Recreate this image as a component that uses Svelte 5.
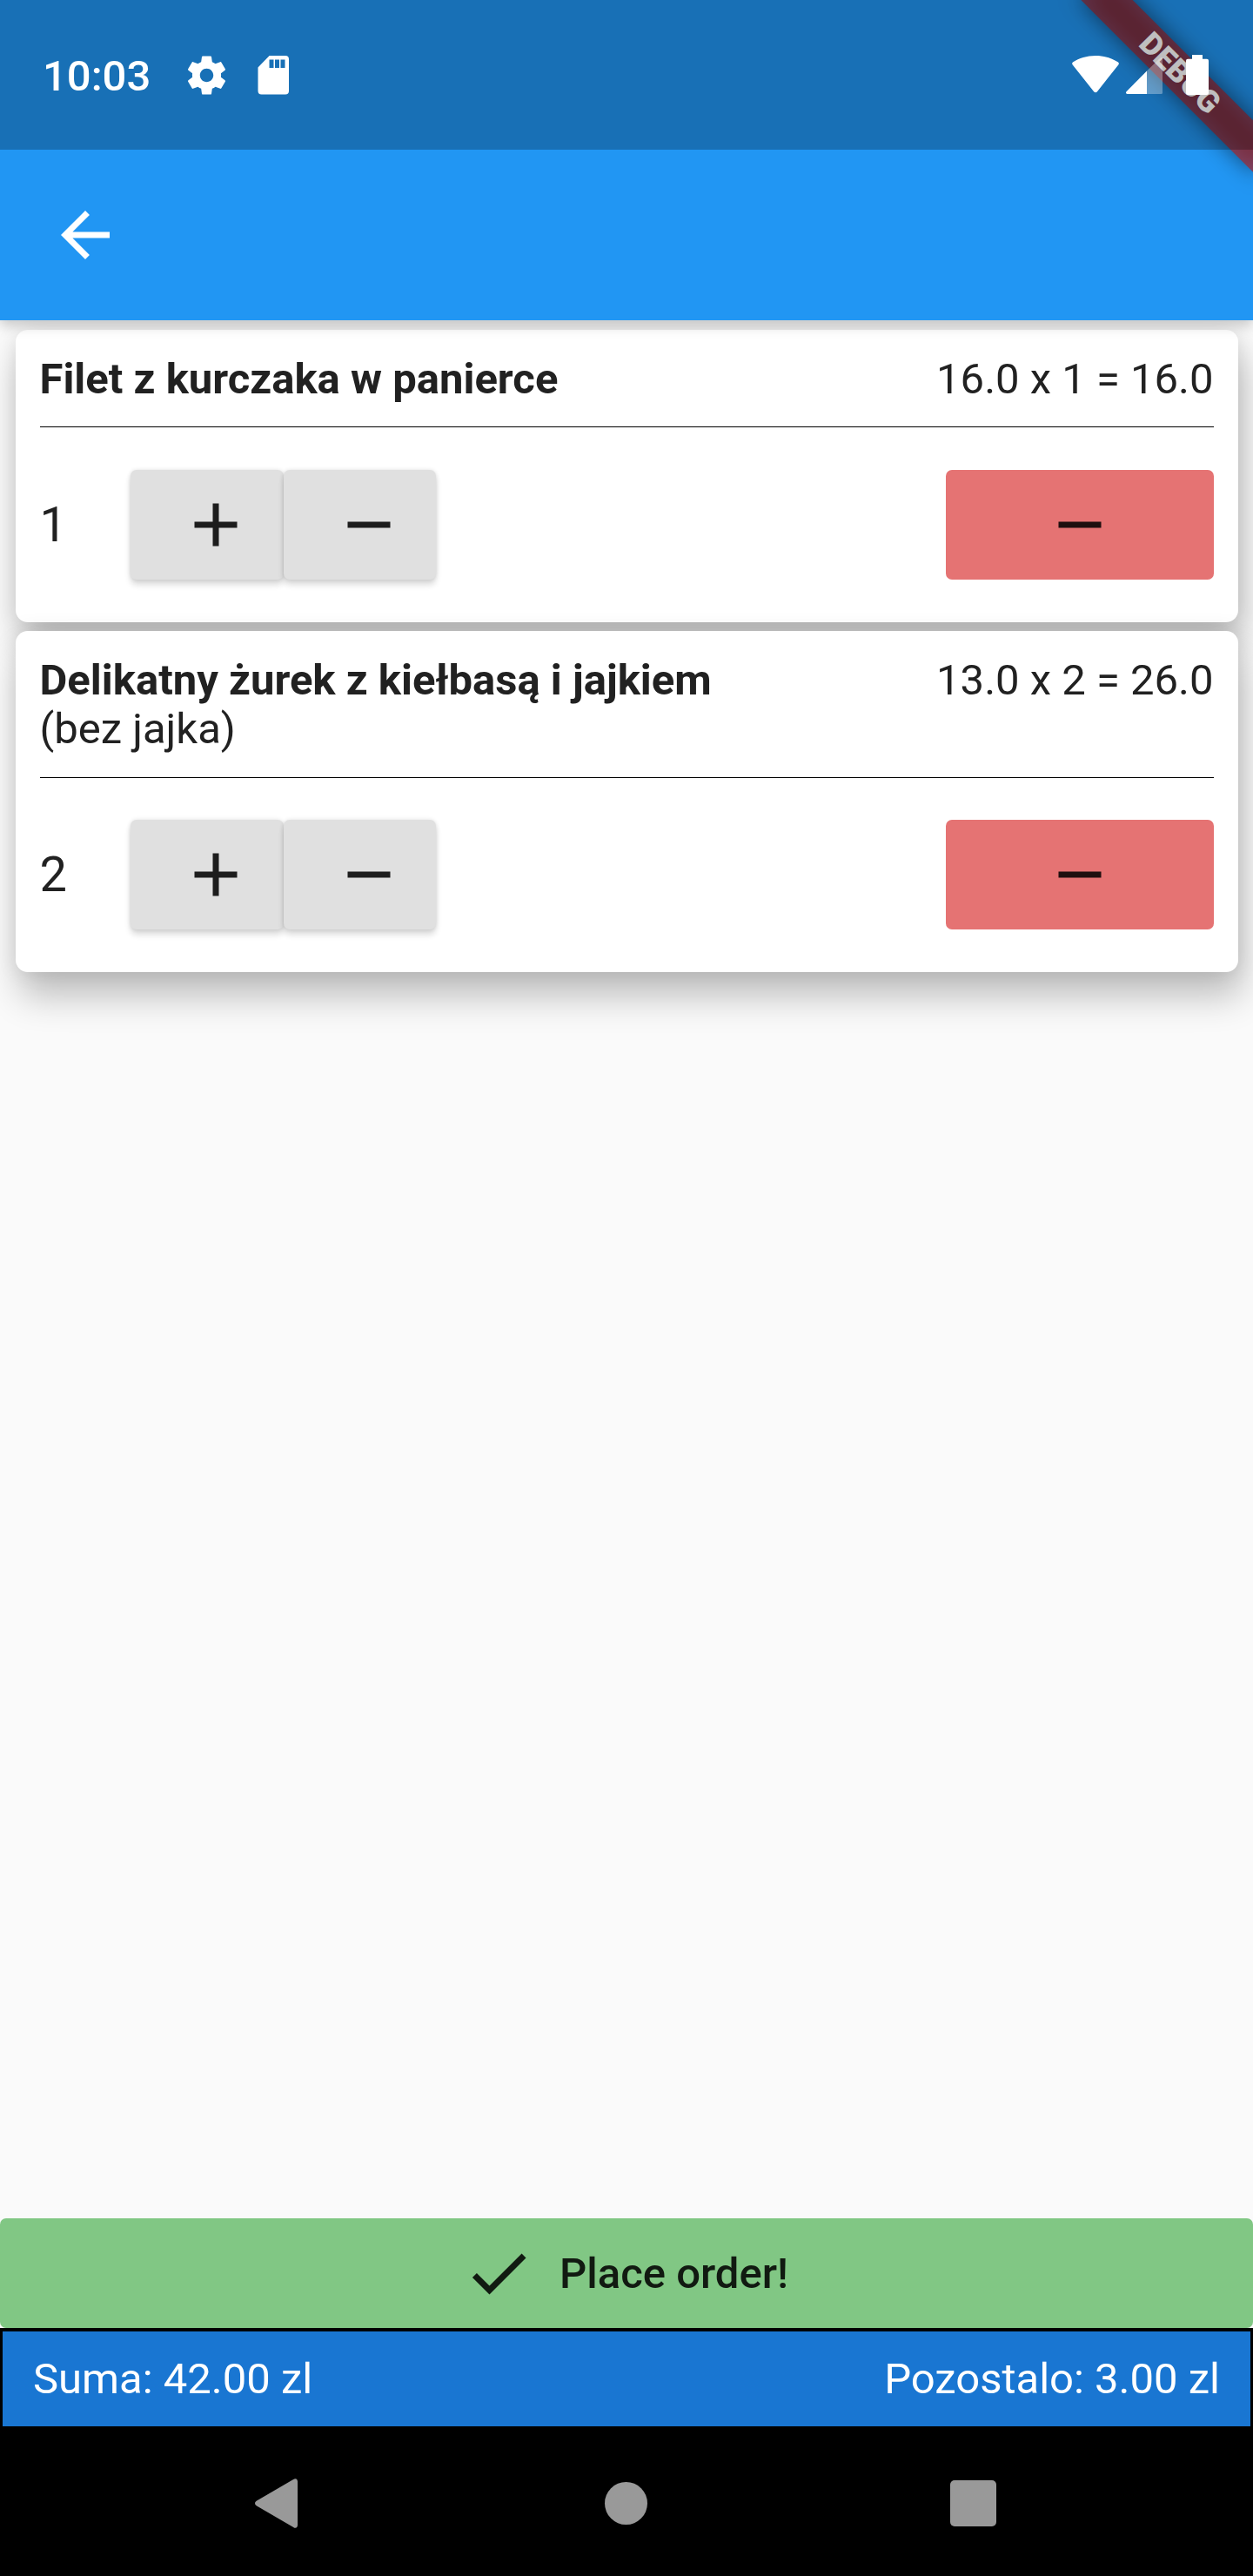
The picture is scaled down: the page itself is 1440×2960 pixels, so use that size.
<script>
  const items = [
    { name: 'Filet z kurczaka w panierce', note: '', sum: '16.0 x 1 = 16.0', count: 1 },
    { name: 'Delikatny żurek z kiełbasą i jajkiem', note: '(bez jajka)', sum: '13.0 x 2 = 26.0', count: 2 }
  ];
</script>

<div class="screen">
  <div class="banner-clip">
    <div class="banner-shadow"></div>
    <div class="banner">DEBUG</div>
  </div>

  <div class="status">
    <span class="clock">10:03</span>
    <svg class="gear" viewBox="0 0 24 24"><path d="M19.43 12.98c.04-.32.07-.64.07-.98s-.03-.66-.07-.98l2.11-1.65c.19-.15.24-.42.12-.64l-2-3.46c-.12-.22-.39-.3-.61-.22l-2.49 1c-.52-.4-1.08-.73-1.69-.98l-.38-2.65C14.46 2.18 14.25 2 14 2h-4c-.25 0-.46.18-.49.42l-.38 2.65c-.61.25-1.17.59-1.69.98l-2.49-1c-.23-.09-.49 0-.61.22l-2 3.46c-.13.22-.07.49.12.64l2.11 1.65c-.04.32-.07.65-.07.98s.03.66.07.98l-2.11 1.65c-.19.15-.24.42-.12.64l2 3.46c.12.22.39.3.61.22l2.49-1c.52.4 1.08.73 1.69.98l.38 2.65c.03.24.24.42.49.42h4c.25 0 .46-.18.49-.42l.38-2.65c.61-.25 1.17-.59 1.69-.98l2.49 1c.23.09.49 0 .61-.22l2-3.46c.12-.22.07-.49-.12-.64l-2.11-1.65zM12 15.5c-1.93 0-3.5-1.57-3.5-3.5s1.57-3.5 3.5-3.5 3.5 1.57 3.5 3.5-1.57 3.5-3.5 3.5z" /></svg>
    <svg class="sd" viewBox="0 0 36 46"><path fill-rule="evenodd" d="M13.6 1H32a4 4 0 0 1 4 4v36.500a4 4 0 0 1-4 4H4.500a4 4 0 0 1-4-4V14.500zM13.500 5.500v9.500h5V5.500zM20 5.500v9.500h5V5.500zM26.500 5.500v9.500h5V5.500z" /></svg>
    <span class="grow"></span>
    <svg class="wifi" viewBox="0 0 54 44"><path d="M1.300 8.300C8 4 17 1 27 1s19 3 25.700 7.300c1.300.8 1.500 2 .6 3.100L29 42.200c-1.100 1.400-2.800 1.400-3.900 0L.7 11.400C-.2 10.300 0 9.100 1.300 8.300z" /></svg>
    <svg class="signal" viewBox="0 0 42 42"><path d="M24 15.500V42H1.500C0 42-.5 40.500.5 39.300z" /><path opacity=".32" d="M24 15.500L39.500.5C40.800-.5 42 0 42 1.500V40.500a1.500 1.500 0 0 1-1.500 1.500H24z" /></svg>
    <svg class="battery" viewBox="0 0 26 46"><path d="M7 0h12v4.700h5a2 2 0 0 1 2 2V44a2 2 0 0 1-2 2H2a2 2 0 0 1-2-2V6.700a2 2 0 0 1 2-2h5z" /></svg>
  </div>

  <header class="appbar">
    <svg class="icon" viewBox="0 0 24 24"><path d="M20 11H7.830l5.590-5.590L12 4l-8 8 8 8 1.410-1.410L7.830 13H20v-2z" /></svg>
  </header>

  <main class="list">
    {#each items as item}
      <section class="card">
        <div class="head">
          <div class="title">
            <strong>{item.name}</strong>
            {#if item.note}<span>{item.note}</span>{/if}
          </div>
          <span>{item.sum}</span>
        </div>
        <div class="controls">
          <span class="count">{item.count}</span>
          <button class="step" aria-label="Add">
            <svg class="icon" viewBox="0 0 24 24"><path d="M19 13h-6v6h-2v-6H5v-2h6V5h2v6h6v2z" /></svg>
          </button>
          <button class="step" aria-label="Subtract">
            <svg class="icon" viewBox="0 0 24 24"><path d="M19 13H5v-2h14v2z" /></svg>
          </button>
          <span class="grow"></span>
          <button class="remove" aria-label="Remove">
            <svg class="icon" viewBox="0 0 24 24"><path d="M19 13H5v-2h14v2z" /></svg>
          </button>
        </div>
      </section>
    {/each}
  </main>

  <button class="order">
    <svg class="icon" viewBox="0 0 24 24"><path d="M9 16.170L4.830 12l-1.420 1.410L9 19 21 7l-1.410-1.410z" /></svg>
    <span>Place order!</span>
  </button>

  <footer class="summary">
    <span>Suma: 42.00 zl</span>
    <span>Pozostalo: 3.00 zl</span>
  </footer>

  <nav class="navbar">
    <svg class="back" viewBox="0 0 49 57"><path d="M49 3.500v50c0 3-2.500 4.200-4.800 2.400L1.700 31.200c-2.200-1.600-2.200-3.800 0-5.400L44.200 1.100C46.500-.7 49 .5 49 3.500z" /></svg>
    <span class="home"></span>
    <span class="recent"></span>
  </nav>
</div>

<style>
  :global(body) {
    margin: 0;
    background: #fafafa;
  }
  .screen {
    position: relative;
    display: flex;
    flex-direction: column;
    width: 1440px;
    height: 2960px;
    overflow: hidden;
    background: #fafafa;
    font: 400 49px/56px Roboto, sans-serif;
    color: #212121;
  }
  svg {
    display: block;
    flex: none;
    fill: currentColor;
  }
  button {
    border: 0;
    padding: 0;
    margin: 0;
    font: inherit;
    color: #1d1d1d;
  }
  .icon {
    width: 84px;
    height: 84px;
  }
  .grow {
    flex: 1;
  }

  /* Corner ribbon, painted above the app bar and below the status icons */
  .banner-clip {
    position: absolute;
    top: 0;
    right: 0;
    width: 320px;
    height: 320px;
    overflow: hidden;
    z-index: 2;
  }
  .banner,
  .banner-shadow {
    position: absolute;
    left: 95.9px;
    top: 63.1px;
    width: 280px;
    height: 42px;
    transform: rotate(45deg);
  }
  .banner-shadow {
    background: rgba(0, 0, 0, 0.5);
    filter: blur(12.6px);
  }
  .banner {
    background: rgba(183, 28, 28, 0.627);
    color: #fff;
    font-size: 35.7px;
    font-weight: 900;
    line-height: 42px;
    text-align: center;
  }

  .status {
    position: relative;
    z-index: 3;
    box-sizing: border-box;
    flex: none;
    display: flex;
    align-items: flex-start;
    height: 172px;
    padding: 60px 51px 0 49px;
    background: rgba(0, 0, 0, 0.25);
    color: #fff;
  }
  .clock {
    width: 162px;
    font-weight: 500;
    font-size: 49px;
    line-height: 56px;
  }
  .gear {
    width: 53px;
    height: 53px;
  }
  .sd {
    width: 36px;
    height: 46px;
    margin: 3px 0 0 32px;
  }
  .wifi {
    width: 54px;
    height: 44px;
    margin-top: 3px;
  }
  .signal {
    width: 42px;
    height: 42px;
    margin: 6px 0 0 8px;
  }
  .battery {
    width: 26px;
    height: 46px;
    margin: 3px 0 0 27px;
  }

  .appbar {
    position: relative;
    z-index: 1;
    flex: none;
    box-sizing: border-box;
    height: 368px;
    margin-top: -172px;
    padding: 228px 56px 0;
    background: #2196f3;
    color: #fff;
    box-shadow: 0 6px 14px rgba(0, 0, 0, 0.2);
  }

  .list {
    flex: 1;
    display: flex;
    flex-direction: column;
    gap: 10.5px;
    padding: 10.5px 17.5px 0;
  }
  .card {
    box-sizing: border-box;
    padding: 29px 28px 49px;
    border-radius: 14px;
    background: #fff;
    box-shadow: 5px 28px 42px rgba(0, 0, 0, 0.24), 1px 0 24px rgba(0, 0, 0, 0.1);
  }
  .head {
    display: flex;
    justify-content: space-between;
    padding-bottom: 26.5px;
    border-bottom: 1px solid #000;
  }
  .title {
    display: flex;
    flex-direction: column;
  }
  strong {
    font-weight: 700;
  }
  .controls {
    display: flex;
    align-items: center;
    padding-top: 48.5px;
  }
  .count {
    width: 104.5px;
    font-size: 56px;
  }
  .step {
    box-sizing: border-box;
    width: 175.5px;
    height: 126px;
    padding-left: 56px;
    border-radius: 7px;
    background: #e0e0e0;
    box-shadow: 0 6px 7px rgba(0, 0, 0, 0.14), 0 0 5px rgba(0, 0, 0, 0.12);
  }
  .remove {
    display: flex;
    align-items: center;
    justify-content: center;
    width: 308px;
    height: 126px;
    border-radius: 7px;
    background: #e57373;
    color: #1f0f0f;
  }

  .order {
    flex: none;
    display: flex;
    align-items: center;
    justify-content: center;
    gap: 28px;
    height: 126px;
    padding-right: 3px;
    border-radius: 7px;
    background: #81c784;
    color: #111a11;
    font-weight: 500;
  }
  .order span {
    padding-top: 2px;
  }
  .summary {
    flex: none;
    box-sizing: border-box;
    display: flex;
    align-items: center;
    justify-content: space-between;
    height: 117px;
    padding: 1px 35px 0;
    border: solid #000;
    border-width: 4px 3.5px;
    background: #1976d2;
    color: #fff;
  }
  .navbar {
    flex: none;
    box-sizing: border-box;
    display: flex;
    align-items: center;
    height: 168px;
    padding: 0 295px 0 293px;
    justify-content: space-between;
    background: #000;
    color: #999;
  }
  .back {
    width: 49px;
    height: 57px;
  }
  .home {
    width: 49px;
    height: 49px;
    margin-left: 4px;
    border-radius: 50%;
    background: #999;
  }
  .recent {
    width: 53px;
    height: 53px;
    border-radius: 5px;
    background: #999;
  }
</style>
